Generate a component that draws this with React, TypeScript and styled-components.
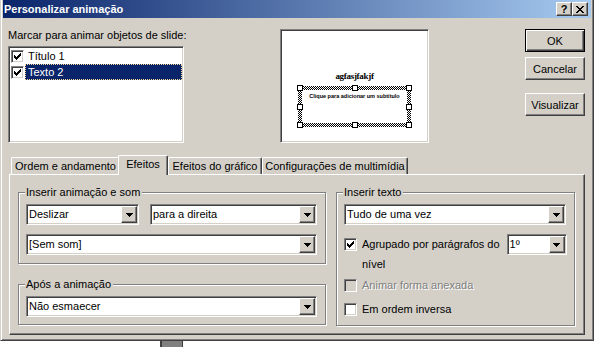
import React from 'react'
import styled, { createGlobalStyle, css } from 'styled-components'

const FACE = '#D4D0C8'
const SHADOW = '#808080'
const DARK = '#404040'
const NAVY = '#0A246A'

const GlobalStyle = createGlobalStyle`
  html, body {
    margin: 0;
    padding: 0;
    background: #fff;
  }
  body {
    font-family: "Liberation Sans", Arial, sans-serif;
    font-size: 11px;
    color: #000;
  }
  #root * {
    box-sizing: border-box;
  }
`

const raised = css`
  border: 1px solid;
  border-color: #fff ${DARK} ${DARK} #fff;
  box-shadow: inset -1px -1px 0 ${SHADOW}, inset 1px 1px 0 ${FACE};
`

const sunken = css`
  border: 1px solid;
  border-color: ${SHADOW} #fff #fff ${SHADOW};
  box-shadow: inset 1px 1px 0 ${DARK}, inset -1px -1px 0 ${FACE};
`

const Window = styled.div`
  width: 594px;
  height: 341px;
  background: ${FACE};
  border-left: 1px solid ${FACE};
  border-right: 1px solid ${DARK};
  border-bottom: 1px solid ${DARK};
  box-shadow: inset 1px 0 0 #fff, inset -1px -1px 0 ${SHADOW};
  padding: 0 2px 2px 2px;
  display: flex;
  flex-direction: column;
`

const TitleBar = styled.div`
  height: 18px;
  flex: none;
  display: flex;
  align-items: center;
  padding-left: 1px;
  background: linear-gradient(to right, ${NAVY}, #A6CAF0);
  color: #fff;
  font-weight: bold;
  font-size: 11px;
`

const TitleText = styled.div`
  flex: 1;
  white-space: nowrap;
`

const CaptionButton = styled.div`
  ${raised}
  width: 16px;
  height: 14px;
  background: ${FACE};
  color: #000;
  display: flex;
  align-items: center;
  justify-content: center;
  font-size: 11px;
  font-weight: bold;
  line-height: 12px;
  &:last-child {
    margin-right: 3px;
  }
`

const TopRow = styled.div`
  display: flex;
  align-items: flex-start;
  margin-top: 11px;
`

const LeftColumn = styled.div`
  width: 176px;
  margin-left: 5px;
  display: flex;
  flex-direction: column;
`

const Caption = styled.div`
  line-height: 13px;
  height: 13px;
  white-space: nowrap;
`

const ListBox = styled.div`
  ${sunken}
  margin-top: 4px;
  height: 97px;
  background: #fff;
  padding: 1px;
  display: flex;
  flex-direction: column;
`

const ListItem = styled.div`
  height: 16px;
  display: flex;
  align-items: center;
  padding-left: 1px;
`

const ItemLabel = styled.div<{ $selected?: boolean }>`
  flex: 1;
  height: 16px;
  margin-left: 1px;
  padding-left: 2px;
  line-height: 14px;
  border: 1px solid transparent;
  ${(p) =>
    p.$selected &&
    css`
      background: ${NAVY};
      color: #fff;
      border: 1px dotted #f5db95;
    `}
`

const Preview = styled.div`
  ${sunken}
  width: 149px;
  height: 114px;
  margin-left: 96px;
  background: #fff;
  padding-top: 41px;
  display: flex;
  flex-direction: column;
  align-items: center;
`

const SlideTitle = styled.div`
  font-family: "Liberation Serif", serif;
  font-size: 9px;
  line-height: 10px;
  font-weight: bold;
  letter-spacing: -0.3px;
`

const Placeholder = styled.div`
  position: relative;
  width: 113px;
  height: 41px;
  margin-top: 5px;
  padding: 4px;
  background: repeating-conic-gradient(#000 0 25%, #fff 0 50%) 0 0 / 2px 2px;
`

const PlaceholderInner = styled.div`
  height: 100%;
  background: #fff;
  text-align: center;
  font-size: 5.5px;
  font-weight: bold;
  line-height: 7px;
  padding-top: 3px;
  white-space: nowrap;
`

const Handle = styled.span<{ $x: 'l' | 'c' | 'r'; $y: 't' | 'm' | 'b' }>`
  position: absolute;
  width: 6px;
  height: 6px;
  background: #fff;
  border: 1px solid #000;
  ${(p) => (p.$x === 'l' ? 'left: -1px;' : p.$x === 'r' ? 'right: -1px;' : 'left: calc(50% - 3px);')}
  ${(p) => (p.$y === 't' ? 'top: -1px;' : p.$y === 'b' ? 'bottom: -1px;' : 'top: calc(50% - 3px);')}
`

const ButtonColumn = styled.div`
  margin-left: 96px;
  width: 60px;
  display: flex;
  flex-direction: column;
`

const PushButton = styled.button<{ $default?: boolean; $gap?: number }>`
  width: 60px;
  height: 23px;
  margin: ${(p) => p.$gap || 0}px 0 0 0;
  padding: 0;
  background: ${FACE};
  font: inherit;
  color: #000;
  display: flex;
  align-items: center;
  justify-content: center;
  ${(p) =>
    p.$default
      ? css`
          border: 1px solid #000;
          box-shadow: inset 1px 1px 0 #fff, inset -1px -1px 0 ${DARK}, inset -2px -2px 0 ${SHADOW};
        `
      : raised}
`

const TabStrip = styled.div`
  display: flex;
  align-items: flex-end;
  height: 19px;
  margin: 12px 0 0 8px;
`

const Tab = styled.div<{ $w: number; $active?: boolean }>`
  position: relative;
  width: ${(p) => p.$w}px;
  height: ${(p) => (p.$active ? 20 : 17)}px;
  margin-left: ${(p) => (p.$active ? -2 : 0)}px;
  margin-bottom: ${(p) => (p.$active ? -1 : 0)}px;
  padding-bottom: ${(p) => (p.$active ? 3 : 0)}px;
  z-index: ${(p) => (p.$active ? 1 : 0)};
  background: ${FACE};
  border-top: 1px solid #fff;
  border-left: 1px solid #fff;
  border-right: 1px solid ${DARK};
  border-radius: 2px 2px 0 0;
  box-shadow: inset -1px 0 0 ${SHADOW};
  display: flex;
  align-items: center;
  justify-content: center;
  white-space: nowrap;
`

const Panel = styled.div`
  width: 576px;
  height: 161px;
  margin-left: 6px;
  border-top: 1px solid #fff;
  border-left: 1px solid #fff;
  border-right: 1px solid ${DARK};
  border-bottom: 1px solid ${DARK};
  box-shadow: inset -1px -1px 0 ${SHADOW};
  padding: 17px 8px 0 8px;
  display: flex;
  align-items: flex-start;
`

const Column = styled.div`
  display: flex;
  flex-direction: column;
`

const GroupBox = styled.div<{ $w: number; $gap?: number; $pb?: number }>`
  width: ${(p) => p.$w}px;
  margin-top: ${(p) => p.$gap || 0}px;
  border: 1px solid ${SHADOW};
  box-shadow: inset 1px 1px 0 #fff, 1px 1px 0 #fff;
  padding: 0 7px ${(p) => p.$pb ?? 8}px 7px;
  display: flex;
  flex-direction: column;
  align-items: flex-start;
`

const GroupLabel = styled.div`
  margin: -7px 0 0 -1px;
  padding: 0 2px 0 1px;
  background: ${FACE};
  line-height: 13px;
  white-space: nowrap;
`

const Row = styled.div<{ $gap?: number }>`
  display: flex;
  align-items: center;
  margin-top: ${(p) => p.$gap || 0}px;
`

const Combo = styled.div<{ $w: number; $gap?: number }>`
  ${sunken}
  width: ${(p) => p.$w}px;
  height: 21px;
  margin-left: ${(p) => p.$gap || 0}px;
  background: #fff;
  padding: 1px;
  display: flex;
  flex: none;
`

const ComboText = styled.div`
  flex: 1;
  padding-left: 1px;
  line-height: 17px;
  white-space: nowrap;
  overflow: hidden;
`

const DropButton = styled.div`
  ${raised}
  width: 16px;
  background: ${FACE};
  display: flex;
  align-items: center;
  justify-content: center;
`

const CheckBox = styled.span<{ $disabled?: boolean }>`
  ${sunken}
  width: 13px;
  height: 13px;
  flex: none;
  background: ${(p) => (p.$disabled ? FACE : '#fff')};
  display: inline-flex;
  align-items: center;
  justify-content: center;
`

const OptionLabel = styled.span<{ $disabled?: boolean }>`
  margin-left: 5px;
  line-height: 13px;
  white-space: nowrap;
  ${(p) =>
    p.$disabled &&
    css`
      color: ${SHADOW};
      text-shadow: 1px 1px 0 #fff;
    `}
`

const Continuation = styled.div<{ $gap?: number }>`
  margin: ${(p) => p.$gap || 0}px 0 0 18px;
  line-height: 13px;
`

const Behind = styled.div`
  width: 23px;
  height: 6px;
  margin-left: 160px;
  background: ${SHADOW};
  border-left: 2px solid ${DARK};
  border-right: 1px solid ${DARK};
`

const Check = () => (
  <svg width="7" height="7" viewBox="0 0 7 7" shapeRendering="crispEdges">
    <path d="M0 2h1v1h1v1h1v-1h1v-1h1v-1h1v-1h1v3h-1v1h-1v1h-1v1h-1v1h-1v-1h-1v-1h-1z" fill="#000" />
  </svg>
)

const Arrow = () => (
  <svg width="7" height="4" viewBox="0 0 7 4" shapeRendering="crispEdges">
    <path d="M0 0h7v1h-1v1h-1v1h-1v1h-1v-1h-1v-1h-1v-1h-1z" fill="#000" />
  </svg>
)

const CloseGlyph = () => (
  <svg width="8" height="7" viewBox="0 0 8 7" shapeRendering="crispEdges">
    <path
      d="M0 0h2v1h1v1h2v-1h1v-1h2v1h-1v1h-1v1h-1v1h1v1h1v1h1v1h-2v-1h-1v-1h-2v1h-1v1h-2v-1h1v-1h1v-1h1v-1h-1v-1h-1v-1h-1z"
      fill="#000"
    />
  </svg>
)

const Select: React.FC<{ w: number; value: string; gap?: number }> = ({ w, value, gap }) => (
  <Combo $w={w} $gap={gap}>
    <ComboText>{value}</ComboText>
    <DropButton>
      <Arrow />
    </DropButton>
  </Combo>
)

const handles: Array<['l' | 'c' | 'r', 't' | 'm' | 'b']> = [
  ['l', 't'], ['c', 't'], ['r', 't'],
  ['l', 'm'], ['r', 'm'],
  ['l', 'b'], ['c', 'b'], ['r', 'b'],
]

const tabs = [
  { label: 'Ordem e andamento', w: 109 },
  { label: 'Efeitos', w: 50, active: true },
  { label: 'Efeitos do gráfico', w: 94 },
  { label: 'Configurações de multimídia', w: 146 },
]

export default function App() {
  return (
    <>
      <GlobalStyle />
      <Window>
        <TitleBar>
          <TitleText>Personalizar animação</TitleText>
          <CaptionButton>?</CaptionButton>
          <CaptionButton>
            <CloseGlyph />
          </CaptionButton>
        </TitleBar>

        <TopRow>
          <LeftColumn>
            <Caption>Marcar para animar objetos de slide:</Caption>
            <ListBox>
              <ListItem>
                <CheckBox><Check /></CheckBox>
                <ItemLabel>Título 1</ItemLabel>
              </ListItem>
              <ListItem>
                <CheckBox><Check /></CheckBox>
                <ItemLabel $selected>Texto 2</ItemLabel>
              </ListItem>
            </ListBox>
          </LeftColumn>

          <Preview>
            <SlideTitle>agfasjfakjf</SlideTitle>
            <Placeholder>
              <PlaceholderInner>Clique para adicionar um subtítulo</PlaceholderInner>
              {handles.map(([x, y]) => (
                <Handle key={x + y} $x={x} $y={y} />
              ))}
            </Placeholder>
          </Preview>

          <ButtonColumn>
            <PushButton $default>OK</PushButton>
            <PushButton $gap={5}>Cancelar</PushButton>
            <PushButton $gap={13}>Visualizar</PushButton>
          </ButtonColumn>
        </TopRow>

        <TabStrip>
          {tabs.map((t) => (
            <Tab key={t.label} $w={t.w} $active={t.active}>
              {t.label}
            </Tab>
          ))}
        </TabStrip>

        <Panel>
          <Column>
            <GroupBox $w={308}>
              <GroupLabel>Inserir animação e som</GroupLabel>
              <Row $gap={5}>
                <Select w={113} value="Deslizar" />
                <Select w={167} value="para a direita" gap={11} />
              </Row>
              <Row $gap={9}>
                <Select w={291} value="[Sem som]" />
              </Row>
            </GroupBox>
            <GroupBox $w={308} $gap={20} $pb={7}>
              <GroupLabel>Após a animação</GroupLabel>
              <Row $gap={5}>
                <Select w={291} value="Não esmaecer" />
              </Row>
            </GroupBox>
          </Column>

          <GroupBox $w={239} $gap={0} $pb={9} style={{ marginLeft: 10 }}>
            <GroupLabel>Inserir texto</GroupLabel>
            <Row $gap={5}>
              <Select w={222} value="Tudo de uma vez" />
            </Row>
            <Row $gap={9}>
              <CheckBox><Check /></CheckBox>
              <OptionLabel>Agrupado por parágrafos do</OptionLabel>
              <Select w={60} value="1º" gap={7} />
            </Row>
            <Continuation $gap={3}>nível</Continuation>
            <Row $gap={8}>
              <CheckBox $disabled />
              <OptionLabel $disabled>Animar forma anexada</OptionLabel>
            </Row>
            <Row $gap={11}>
              <CheckBox />
              <OptionLabel>Em ordem inversa</OptionLabel>
            </Row>
          </GroupBox>
        </Panel>
      </Window>
      <Behind />
    </>
  )
}
